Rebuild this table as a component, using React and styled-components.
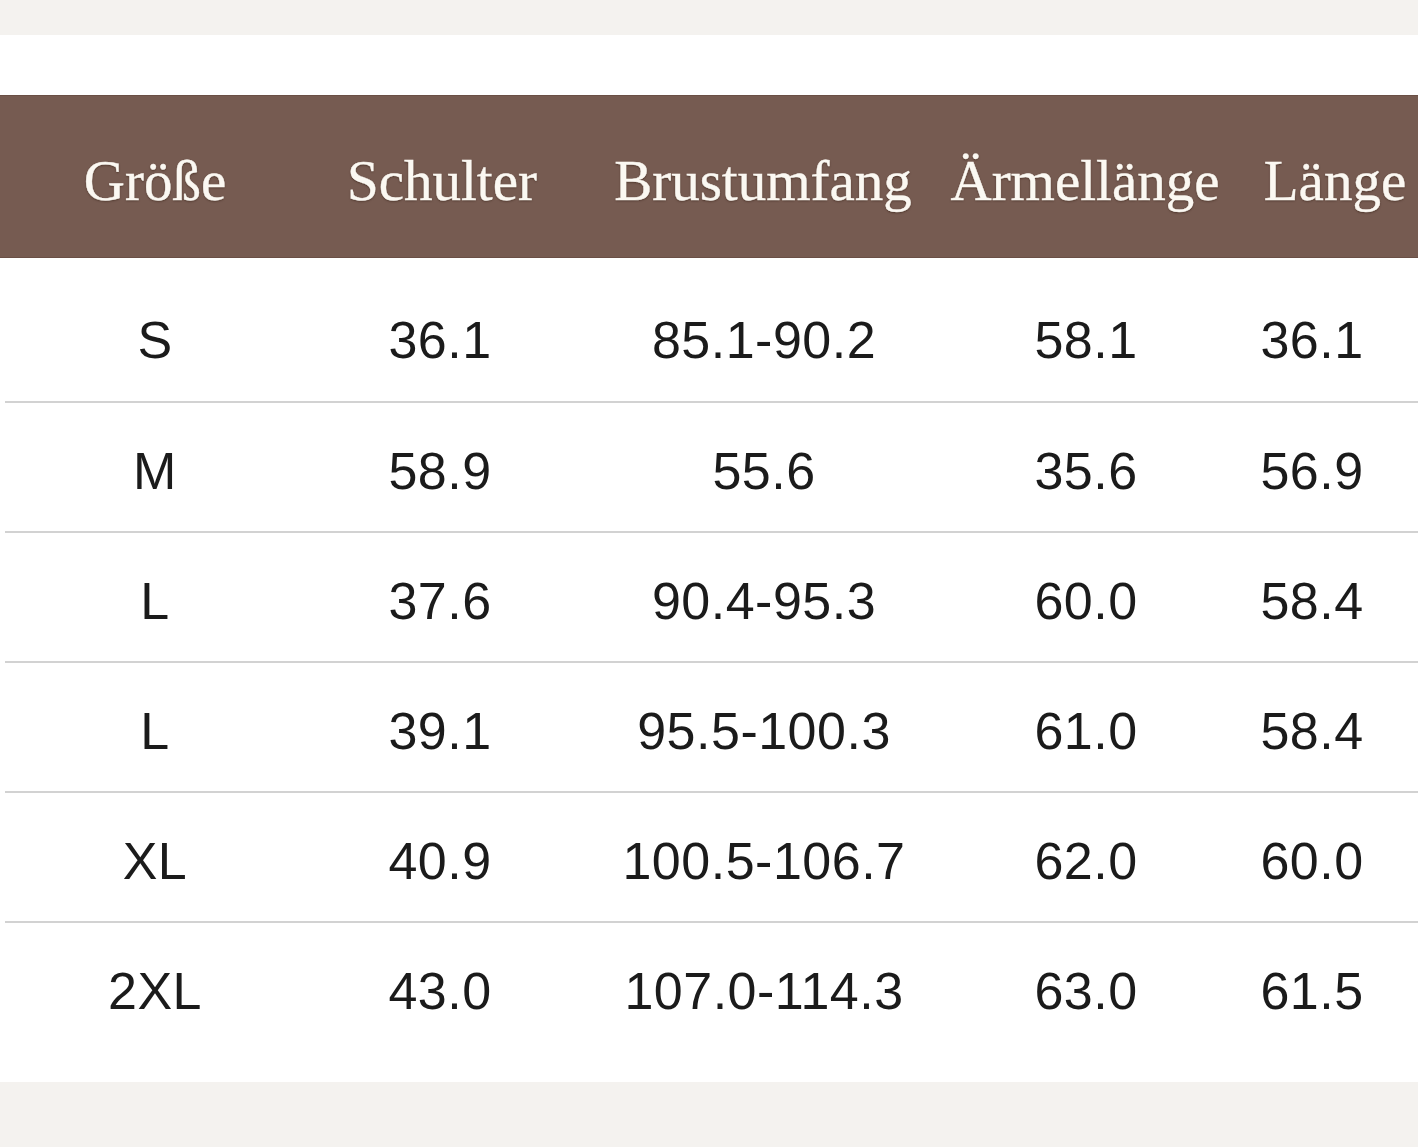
import React from 'react';
import styled, { createGlobalStyle } from 'styled-components';

const headers = ['Größe', 'Schulter', 'Brustumfang', 'Ärmellänge', 'Länge'];

const rows = [
  ['S', '36.1', '85.1-90.2', '58.1', '36.1'],
  ['M', '58.9', '55.6', '35.6', '56.9'],
  ['L', '37.6', '90.4-95.3', '60.0', '58.4'],
  ['L', '39.1', '95.5-100.3', '61.0', '58.4'],
  ['XL', '40.9', '100.5-106.7', '62.0', '60.0'],
  ['2XL', '43.0', '107.0-114.3', '63.0', '61.5'],
];

const GlobalStyle = createGlobalStyle`
  html, body {
    margin: 0;
    padding: 0;
    background: #f4f2ef;
  }
`;

const Page = styled.div`
  padding-top: 35px;
  height: 1147px;
  box-sizing: border-box;
`;

const Sheet = styled.section`
  background: #ffffff;
  padding: 60px 0 31px;
`;

const HeaderBand = styled.div`
  display: grid;
  grid-template-columns: 310px 264px 378px 266px 200px;
  height: 163px;
  box-sizing: border-box;
  background: #765b51;
  border-top: 1px solid #6a4f45;
  border-bottom: 1px solid #6a4f45;
`;

const HeadCell = styled.div`
  display: flex;
  align-items: center;
  justify-content: center;
  padding-left: ${(p) => (p.$last ? '34px' : '0')};
  padding-top: 7px;
  font-family: 'Liberation Serif', 'Times New Roman', serif;
  font-size: 57px;
  color: #fbf8f2;
  white-space: nowrap;
  -webkit-text-stroke: 0.4px #fbf8f2;
  text-shadow: 0 1px 2px rgba(40, 20, 10, 0.55);
`;

const Body = styled.div`
  padding: 13px 0 0 5px;
`;

const Row = styled.div`
  display: grid;
  grid-template-columns: 300px 270px 378px 266px 186px;
  height: 130px;
  box-sizing: border-box;
  border-top: ${(p) => (p.$first ? 'none' : '2px solid #d2d2d2')};
`;

const Cell = styled.div`
  display: flex;
  align-items: center;
  justify-content: center;
  padding-top: 8px;
  font-family: 'Liberation Sans', Arial, sans-serif;
  font-size: 52px;
  letter-spacing: 0.5px;
  color: #1b1b1b;
  white-space: nowrap;
`;

export default function App() {
  return (
    <Page>
      <GlobalStyle />
      <Sheet>
        <HeaderBand>
          {headers.map((h, i) => (
            <HeadCell key={h} $last={i === headers.length - 1}>
              {h}
            </HeadCell>
          ))}
        </HeaderBand>
        <Body>
          {rows.map((r, i) => (
            <Row key={i} $first={i === 0}>
              {r.map((v, j) => (
                <Cell key={j}>{v}</Cell>
              ))}
            </Row>
          ))}
        </Body>
      </Sheet>
    </Page>
  );
}
